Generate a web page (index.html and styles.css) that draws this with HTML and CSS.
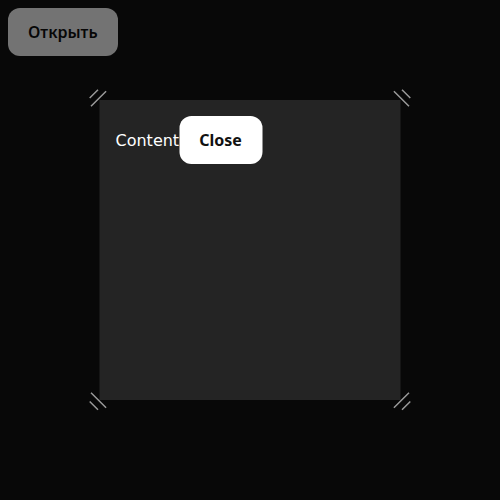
FILE: index.html
```
<!DOCTYPE html>
<html lang="ru">
<head>
<meta charset="utf-8">
<title>Modal</title>
<link rel="stylesheet" href="styles.css">
</head>
<body>
<button class="button">Открыть</button>
<div class="overlay">
<div class="modal">
<svg class="corner corner-tl" viewBox="0 0 18 18"><path d="M1.2 9 9.5 .7M2.5 17.3 17.6 2.2"/></svg>
<svg class="corner corner-tr" viewBox="0 0 18 18"><path d="M1.2 9 9.5 .7M2.5 17.3 17.6 2.2"/></svg>
<svg class="corner corner-bl" viewBox="0 0 18 18"><path d="M1.2 8.5 9.5 .2M2.5 17.3 17.6 2.2"/></svg>
<svg class="corner corner-br" viewBox="0 0 18 18"><path d="M1.2 8.5 9.5 .2M2.5 17.3 17.6 2.2"/></svg>
<span class="content">Content</span><button class="button button-close">Close</button>
</div>
</div>
</body>
</html>
```
FILE: styles.css
```
* { box-sizing: border-box; }
body { margin: 0; padding: 8px; height: 500px; background: #121212; font-family: "DejaVu Sans", sans-serif; }
.button { display: block; height: 48px; padding: 0 20px; border: 0; border-radius: 12px; background: #fff; color: #111; font: 600 16px "Noto Sans", sans-serif; }
.button-close { width: 83px; padding: 0; font-weight: 700; }
.overlay { position: fixed; inset: 0; display: flex; align-items: center; justify-content: center; background: rgba(0,0,0,.55); }
.modal { position: relative; display: flex; align-items: flex-start; flex: none; width: 301px; height: 300px; padding: 16px; background: #242424; color: #fff; transform: translateX(-.5px); }
.content { width: 64px; font-size: 16px; line-height: 50px; text-indent: .5px; white-space: nowrap; }
.corner { position: absolute; width: 18px; height: 18px; fill: none; stroke: #999; stroke-width: 1.5; overflow: visible; }
.corner-tl { left: -11px; top: -11px; }
.corner-tr { right: -11px; top: -11px; transform: scaleX(-1); }
.corner-bl { left: -11px; bottom: -10px; transform: scaleY(-1); }
.corner-br { right: -11px; bottom: -10px; transform: scale(-1); }
```
